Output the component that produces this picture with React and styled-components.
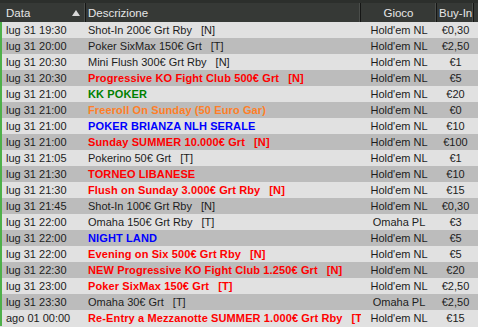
import React from 'react'
import styled, { createGlobalStyle } from 'styled-components'

const GlobalStyle = createGlobalStyle`
  html, body {
    margin: 0;
    padding: 0;
    background: #e1e1e1;
  }
  body {
    font-family: "Liberation Sans", Arial, sans-serif;
  }
`

const HEAD_COLS = '86px 275px 76px 37px 4px'
const ROW_COLS = '84px 275px 76px 37px 4px'

const rows = [
  { date: 'lug 31 19:30', name: 'Shot-In 200€ Grt Rby', tag: '[N]', game: "Hold'em NL", buy: '€0,30' },
  { date: 'lug 31 20:00', name: 'Poker SixMax 150€ Grt', tag: '[T]', game: "Hold'em NL", buy: '€2,50' },
  { date: 'lug 31 20:30', name: 'Mini Flush 300€ Grt Rby', tag: '[N]', game: "Hold'em NL", buy: '€1' },
  { date: 'lug 31 20:30', name: 'Progressive KO Fight Club 500€ Grt', tag: '[N]', game: "Hold'em NL", buy: '€5', color: 'red' },
  { date: 'lug 31 21:00', name: 'KK POKER', game: "Hold'em NL", buy: '€20', color: 'green' },
  { date: 'lug 31 21:00', name: 'Freeroll On Sunday (50 Euro Gar)', game: "Hold'em NL", buy: '€0', color: 'orange' },
  { date: 'lug 31 21:00', name: 'POKER BRIANZA NLH SERALE', game: "Hold'em NL", buy: '€10', color: 'blue' },
  { date: 'lug 31 21:00', name: 'Sunday SUMMER 10.000€ Grt', tag: '[N]', game: "Hold'em NL", buy: '€100', color: 'red' },
  { date: 'lug 31 21:05', name: 'Pokerino 50€ Grt', tag: '[T]', game: "Hold'em NL", buy: '€1' },
  { date: 'lug 31 21:30', name: 'TORNEO LIBANESE', game: "Hold'em NL", buy: '€10', color: 'red' },
  { date: 'lug 31 21:30', name: 'Flush on Sunday 3.000€ Grt Rby', tag: '[N]', game: "Hold'em NL", buy: '€15', color: 'red' },
  { date: 'lug 31 21:45', name: 'Shot-In 100€ Grt Rby', tag: '[N]', game: "Hold'em NL", buy: '€0,30' },
  { date: 'lug 31 22:00', name: 'Omaha 150€ Grt Rby', tag: '[T]', game: 'Omaha PL', buy: '€3' },
  { date: 'lug 31 22:00', name: 'NIGHT LAND', game: "Hold'em NL", buy: '€5', color: 'blue' },
  { date: 'lug 31 22:00', name: 'Evening on Six 500€ Grt Rby', tag: '[N]', game: "Hold'em NL", buy: '€5', color: 'red' },
  { date: 'lug 31 22:30', name: 'NEW Progressive KO Fight Club 1.250€ Grt', tag: '[N]', game: "Hold'em NL", buy: '€20', color: 'red' },
  { date: 'lug 31 23:00', name: 'Poker SixMax 150€ Grt', tag: '[T]', game: "Hold'em NL", buy: '€2,50', color: 'red' },
  { date: 'lug 31 23:30', name: 'Omaha 30€ Grt', tag: '[T]', game: 'Omaha PL', buy: '€2,50' },
  { date: 'ago 01 00:00', name: 'Re-Entry a Mezzanotte SUMMER 1.000€ Grt Rby', tag: '[T]', game: "Hold'em NL", buy: '€15', color: 'red' },
]

const palette = {
  red: '#ff0000',
  green: '#008000',
  orange: '#ff7f27',
  blue: '#0000ff',
}

const Table = styled.div`
  width: 478px;
  height: 327px;
  overflow: hidden;
  font-size: 11px;
  background: #e1e1e1;
`

const Header = styled.div`
  display: grid;
  grid-template-columns: ${HEAD_COLS};
  height: 19px;
  border-top: 3px solid #2c2f2c;
  background: #363936;
  color: #e6e6e6;
  font-size: 11.5px;
  line-height: 20px;
`

const HeadCell = styled.div`
  position: relative;
  padding: 0 ${p => (p.$first ? '6px' : '2px')};
  text-align: ${p => p.$align || 'left'};
  border-right: ${p => (p.$last ? 'none' : '1px solid #151615')};
  box-shadow: ${p => (p.$last ? 'none' : 'inset -1px 0 0 #4a4d4a')};
  white-space: nowrap;
  overflow: hidden;
`

const SortArrow = styled.span`
  position: absolute;
  right: 5px;
  top: 7px;
  width: 0;
  height: 0;
  border-left: 4px solid transparent;
  border-right: 4px solid transparent;
  border-bottom: 6px solid #d8d8d8;
`

const Row = styled.div`
  display: grid;
  grid-template-columns: ${ROW_COLS};
  height: 16px;
  line-height: 16px;
  background: ${p => (p.$alt ? '#bcbcbc' : '#e1e1e1')};
  border-left: 2px solid #4fb04a;
  color: ${p => (p.$color ? palette[p.$color] : '#1c1c1c')};
  font-weight: ${p => (p.$color ? 'bold' : 'normal')};
  letter-spacing: ${p => (p.$color ? '0.12px' : 'normal')};
`

const Cell = styled.div`
  padding: 0 ${p => p.$pad || '2px'};
  text-align: ${p => p.$align || 'left'};
  white-space: nowrap;
  overflow: hidden;
  color: ${p => (p.$plain ? '#1c1c1c' : 'inherit')};
  font-weight: ${p => (p.$plain ? 'normal' : 'inherit')};
  letter-spacing: ${p => (p.$plain ? 'normal' : 'inherit')};
`

const Tag = styled.span`
  margin-left: 9px;
`

export default function App() {
  return (
    <>
      <GlobalStyle />
      <Table>
        <Header>
          <HeadCell $first>
            Data
            <SortArrow />
          </HeadCell>
          <HeadCell>Descrizione</HeadCell>
          <HeadCell $align="center">Gioco</HeadCell>
          <HeadCell $align="center">Buy-In</HeadCell>
          <HeadCell $last />
        </Header>
        {rows.map((r, i) => (
          <Row key={i} $alt={i % 2 === 1} $color={r.color}>
            <Cell $pad="4px" $plain>{r.date}</Cell>
            <Cell>
              {r.name}
              {r.tag && <Tag>{r.tag}</Tag>}
            </Cell>
            <Cell $align="center" $plain>{r.game}</Cell>
            <Cell $align="center" $plain>{r.buy}</Cell>
            <Cell />
          </Row>
        ))}
      </Table>
    </>
  )
}
